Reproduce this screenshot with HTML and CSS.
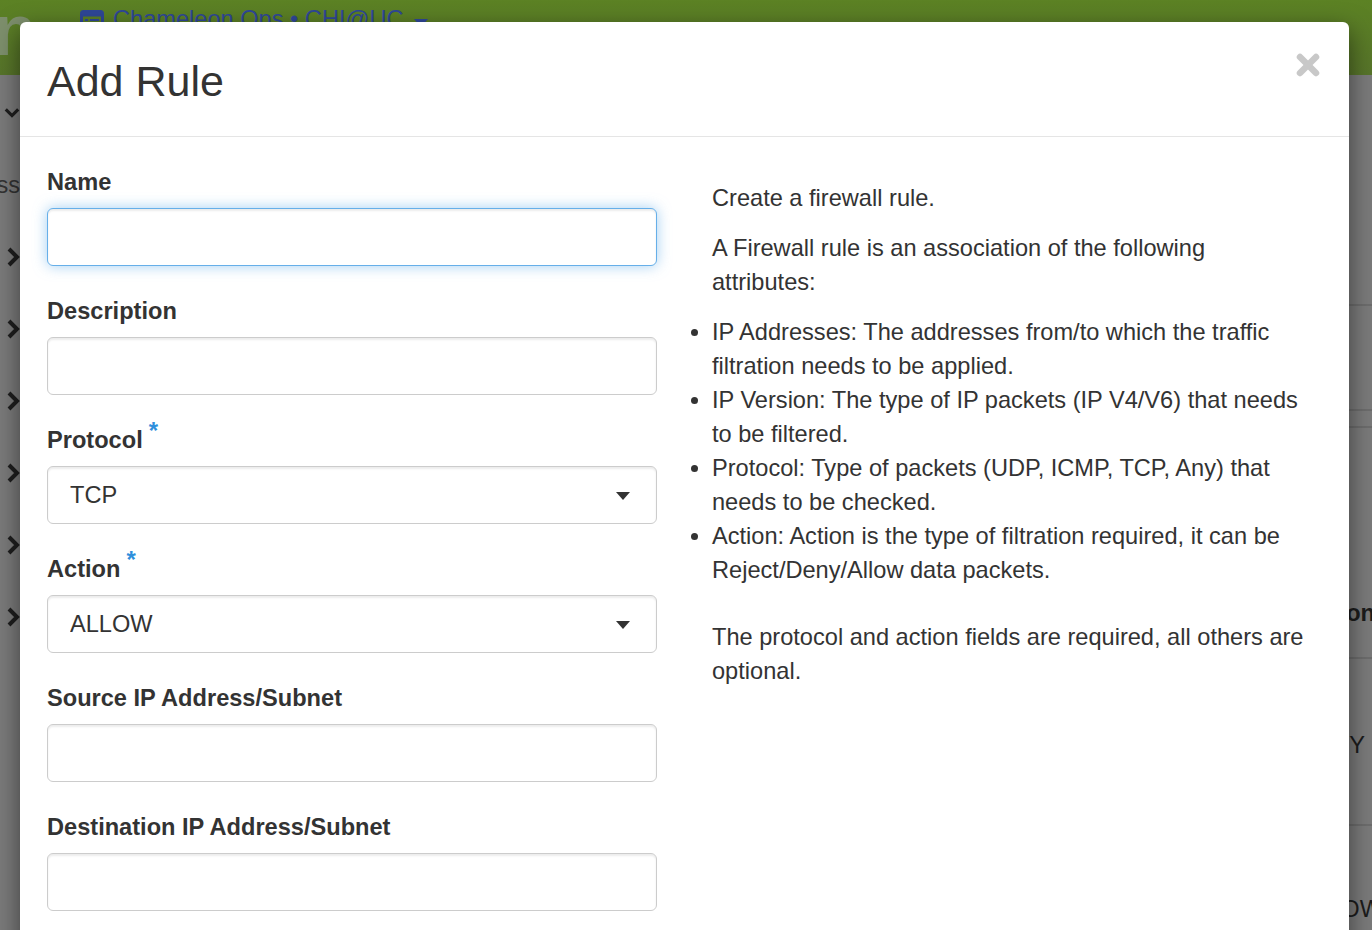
FILE: index.html
```html
<!DOCTYPE html>
<html lang="en">
<head>
<meta charset="utf-8">
<title>Add Rule</title>
<link rel="stylesheet" href="styles.css">
</head>
<body>
<div class="page">
  <header class="topbar">
    <div class="logo"><span>n</span></div>
    <div class="project">
      <svg class="proj-icon" width="24" height="22" viewBox="0 0 24 22">
        <rect x="1.5" y="1.5" width="21" height="19" rx="2" fill="none" stroke="#2f4797" stroke-width="3"/>
        <rect x="1.5" y="1.5" width="21" height="5" fill="#2f4797"/>
        <rect x="5" y="9" width="3" height="2" fill="#2f4797"/>
        <rect x="10" y="9" width="9" height="2" fill="#2f4797"/>
        <rect x="5" y="13" width="3" height="2" fill="#2f4797"/>
        <rect x="10" y="13" width="9" height="2" fill="#2f4797"/>
      </svg>
      <span class="proj-name">Chameleon Ops • CHI@UC</span>
      <span class="caret"></span>
    </div>
  </header>
  <div class="content">
    <nav class="sidebar">
      <div class="side-item">
        <svg width="18" height="12" viewBox="0 0 18 12"><polyline points="2,2 9,9 16,2" fill="none" stroke="#1e1e1e" stroke-width="3.5"/></svg>
      </div>
      <div class="side-item side-text"><span>Access</span></div>
      <div class="side-item"><svg class="chev" width="14" height="20" viewBox="0 0 14 20"><polyline points="3,2 11,10 3,18" fill="none" stroke="#1e1e1e" stroke-width="4"/></svg></div>
      <div class="side-item"><svg class="chev" width="14" height="20" viewBox="0 0 14 20"><polyline points="3,2 11,10 3,18" fill="none" stroke="#1e1e1e" stroke-width="4"/></svg></div>
      <div class="side-item"><svg class="chev" width="14" height="20" viewBox="0 0 14 20"><polyline points="3,2 11,10 3,18" fill="none" stroke="#1e1e1e" stroke-width="4"/></svg></div>
      <div class="side-item"><svg class="chev" width="14" height="20" viewBox="0 0 14 20"><polyline points="3,2 11,10 3,18" fill="none" stroke="#1e1e1e" stroke-width="4"/></svg></div>
      <div class="side-item"><svg class="chev" width="14" height="20" viewBox="0 0 14 20"><polyline points="3,2 11,10 3,18" fill="none" stroke="#1e1e1e" stroke-width="4"/></svg></div>
      <div class="side-item"><svg class="chev" width="14" height="20" viewBox="0 0 14 20"><polyline points="3,2 11,10 3,18" fill="none" stroke="#1e1e1e" stroke-width="4"/></svg></div>
    </nav>
    <main class="main">
      <div class="trow t-top"></div>
      <div class="trow t-a"></div>
      <div class="trow t-b"></div>
      <div class="trow t-head"><span class="cell bold">Action</span></div>
      <div class="trow t-1"><span class="cell">ANY</span></div>
      <div class="trow t-2"><span class="cell">ALLOW</span></div>
    </main>
  </div>
</div>

<div class="modal">
  <div class="modal-header">
    <h3 class="modal-title">Add Rule</h3>
    <button class="close" type="button" aria-label="Close">
      <svg width="24" height="24" viewBox="0 0 24 24">
        <line x1="4" y1="4" x2="20" y2="20" stroke="#c8c8c8" stroke-width="6.5" stroke-linecap="round"/>
        <line x1="20" y1="4" x2="4" y2="20" stroke="#c8c8c8" stroke-width="6.5" stroke-linecap="round"/>
      </svg>
    </button>
  </div>
  <div class="modal-body">
    <form class="form-col">
      <div class="form-group">
        <label class="label">Name</label>
        <input class="form-control focus" type="text">
      </div>
      <div class="form-group">
        <label class="label">Description</label>
        <input class="form-control" type="text">
      </div>
      <div class="form-group">
        <label class="label">Protocol<span class="req">*</span></label>
        <div class="select-wrap">
          <select class="form-control form-select"><option>TCP</option></select>
        </div>
      </div>
      <div class="form-group">
        <label class="label">Action<span class="req">*</span></label>
        <div class="select-wrap">
          <select class="form-control form-select"><option>ALLOW</option></select>
        </div>
      </div>
      <div class="form-group">
        <label class="label">Source IP Address/Subnet</label>
        <input class="form-control" type="text">
      </div>
      <div class="form-group">
        <label class="label">Destination IP Address/Subnet</label>
        <input class="form-control" type="text">
      </div>
    </form>
    <div class="help">
      <p>Create a firewall rule.</p>
      <p>A Firewall rule is an association of the following attributes:</p>
      <ul>
        <li>IP Addresses: The addresses from/to which the traffic filtration needs to be applied.</li>
        <li>IP Version: The type of IP packets (IP V4/V6) that needs to be filtered.</li>
        <li>Protocol: Type of packets (UDP, ICMP, TCP, Any) that needs to be checked.</li>
        <li>Action: Action is the type of filtration required, it can be Reject/Deny/Allow data packets.</li>
      </ul>
      <p>The protocol and action fields are required, all others are optional.</p>
    </div>
  </div>
</div>
</body>
</html>
```

FILE: styles.css
```css
html, body {
  margin: 0;
  padding: 0;
  height: 100%;
  overflow: hidden;
}
body {
  font-family: "Liberation Sans", Arial, Helvetica, sans-serif;
  color: #333;
  background: #7a7a7a;
  position: relative;
}

/* background page (under overlay) */
.page {
  display: flex;
  flex-direction: column;
  height: 100%;
}
.topbar {
  height: 75px;
  flex: none;
  display: flex;
  align-items: flex-start;
  background: linear-gradient(to bottom, #5c8224 0%, #57742a 100%);
  overflow: hidden;
}
.logo {
  width: 80px;
  flex: none;
  overflow: hidden;
}
.logo span {
  display: block;
  margin-left: -7px;
  margin-top: -6px;
  font-size: 72px;
  line-height: 1;
  font-weight: bold;
  color: #7d8f6c;
}
.project {
  display: flex;
  align-items: flex-start;
  padding-top: 2px;
  color: #2f4797;
  font-size: 23.6px;
  line-height: 34px;
}
.proj-icon {
  margin-top: 8px;
  margin-right: 9px;
}
.caret {
  width: 0;
  height: 0;
  margin-left: 10px;
  margin-top: 17px;
  border-left: 7px solid transparent;
  border-right: 7px solid transparent;
  border-top: 8px solid #2f4797;
}
.content {
  flex: 1;
  display: flex;
  background: #7a7a7a;
}
.sidebar {
  width: 20px;
  flex: none;
  display: flex;
  flex-direction: column;
  padding-top: 2px;
}
.side-item {
  height: 72px;
  display: flex;
  align-items: center;
  padding-left: 4px;
}
.side-item .chev {
  margin-left: 2px;
}
.side-text {
  justify-content: flex-end;
  overflow: hidden;
  padding-left: 0;
  font-size: 23.6px;
  color: #333;
}
.side-text span {
  flex: none;
}
.main {
  flex: 1;
  display: flex;
  flex-direction: column;
}
.trow {
  display: flex;
  justify-content: flex-end;
  overflow: hidden;
  font-size: 23.6px;
  color: #1c1c1c;
}
.t-top { height: 229px; border-bottom: 2px solid #6c6c6c; }
.t-a { height: 103px; border-bottom: 2px solid #6c6c6c; }
.t-b { height: 15px; border-bottom: 2px solid #6c6c6c; }
.t-head { height: 229px; border-bottom: 2px solid #6c6c6c; align-items: flex-end; }
.t-head .cell { margin-bottom: 30px; margin-right: -3px; }
.t-1 { height: 165px; border-bottom: 2px solid #6c6c6c; align-items: center; }
.t-1 .cell { margin-right: 7px; margin-top: 8px; }
.t-2 { flex: 1; align-items: flex-start; }
.t-2 .cell { margin-top: 70px; margin-right: -10px; }
.cell { flex: none; }
.bold { font-weight: bold; }

/* modal */
.modal {
  position: absolute;
  left: 20px;
  top: 22px;
  width: 1329px;
  height: 1000px;
  background: #fff;
  border-radius: 6px 6px 0 0;
  box-shadow: 0 8px 25px rgba(0, 0, 0, 0.5);
}
.modal-header {
  box-sizing: border-box;
  height: 115px;
  display: flex;
  justify-content: space-between;
  align-items: flex-start;
  padding: 31px 29px 0 27px;
  border-bottom: 1px solid #e5e5e5;
}
.modal-title {
  margin: 5px 0 0 0;
  font-size: 43px;
  line-height: 46px;
  font-weight: normal;
  color: #333;
}
.close {
  border: 0;
  background: none;
  padding: 0;
  margin: 0;
  width: 24px;
  height: 24px;
  cursor: pointer;
}
.close svg {
  display: block;
}
.modal-body {
  display: grid;
  grid-template-columns: 610px 600px;
  column-gap: 55px;
  padding: 28px 27px;
  font-size: 23.6px;
  line-height: 34px;
}
.form-col {
  margin: 0;
}
.form-group {
  margin-bottom: 28px;
}
.label {
  display: block;
  font-weight: bold;
  line-height: 34px;
  margin-bottom: 9px;
  color: #333;
}
.req {
  color: #2f8fdc;
  font-size: 24px;
  line-height: 0;
  margin-left: 6px;
  vertical-align: 9px;
}
.form-control {
  display: block;
  box-sizing: border-box;
  width: 100%;
  height: 58px;
  margin: 0;
  padding: 0 22px;
  font: inherit;
  font-size: 23.6px;
  color: #333;
  background: #fff;
  border: 1px solid #ccc;
  border-radius: 6px;
  box-shadow: inset 0 2px 2px rgba(0, 0, 0, 0.075);
  outline: none;
}
.form-control.focus {
  border-color: #66afe9;
  box-shadow: inset 0 2px 2px rgba(0, 0, 0, 0.075), 0 0 14px rgba(102, 175, 233, 0.6);
}
.select-wrap {
  position: relative;
}
.form-select {
  appearance: none;
  -webkit-appearance: none;
}
.select-wrap::after {
  content: "";
  position: absolute;
  right: 27px;
  top: 26px;
  width: 0;
  height: 0;
  border-left: 7px solid transparent;
  border-right: 7px solid transparent;
  border-top: 8px solid #333;
  pointer-events: none;
}
.help {
  padding-top: 16px;
  color: #333;
}
.help p {
  margin: 0 0 16px 0;
}
.help ul {
  margin: 0 0 33px 0;
  padding-left: 0;
  list-style: disc outside;
}
```
